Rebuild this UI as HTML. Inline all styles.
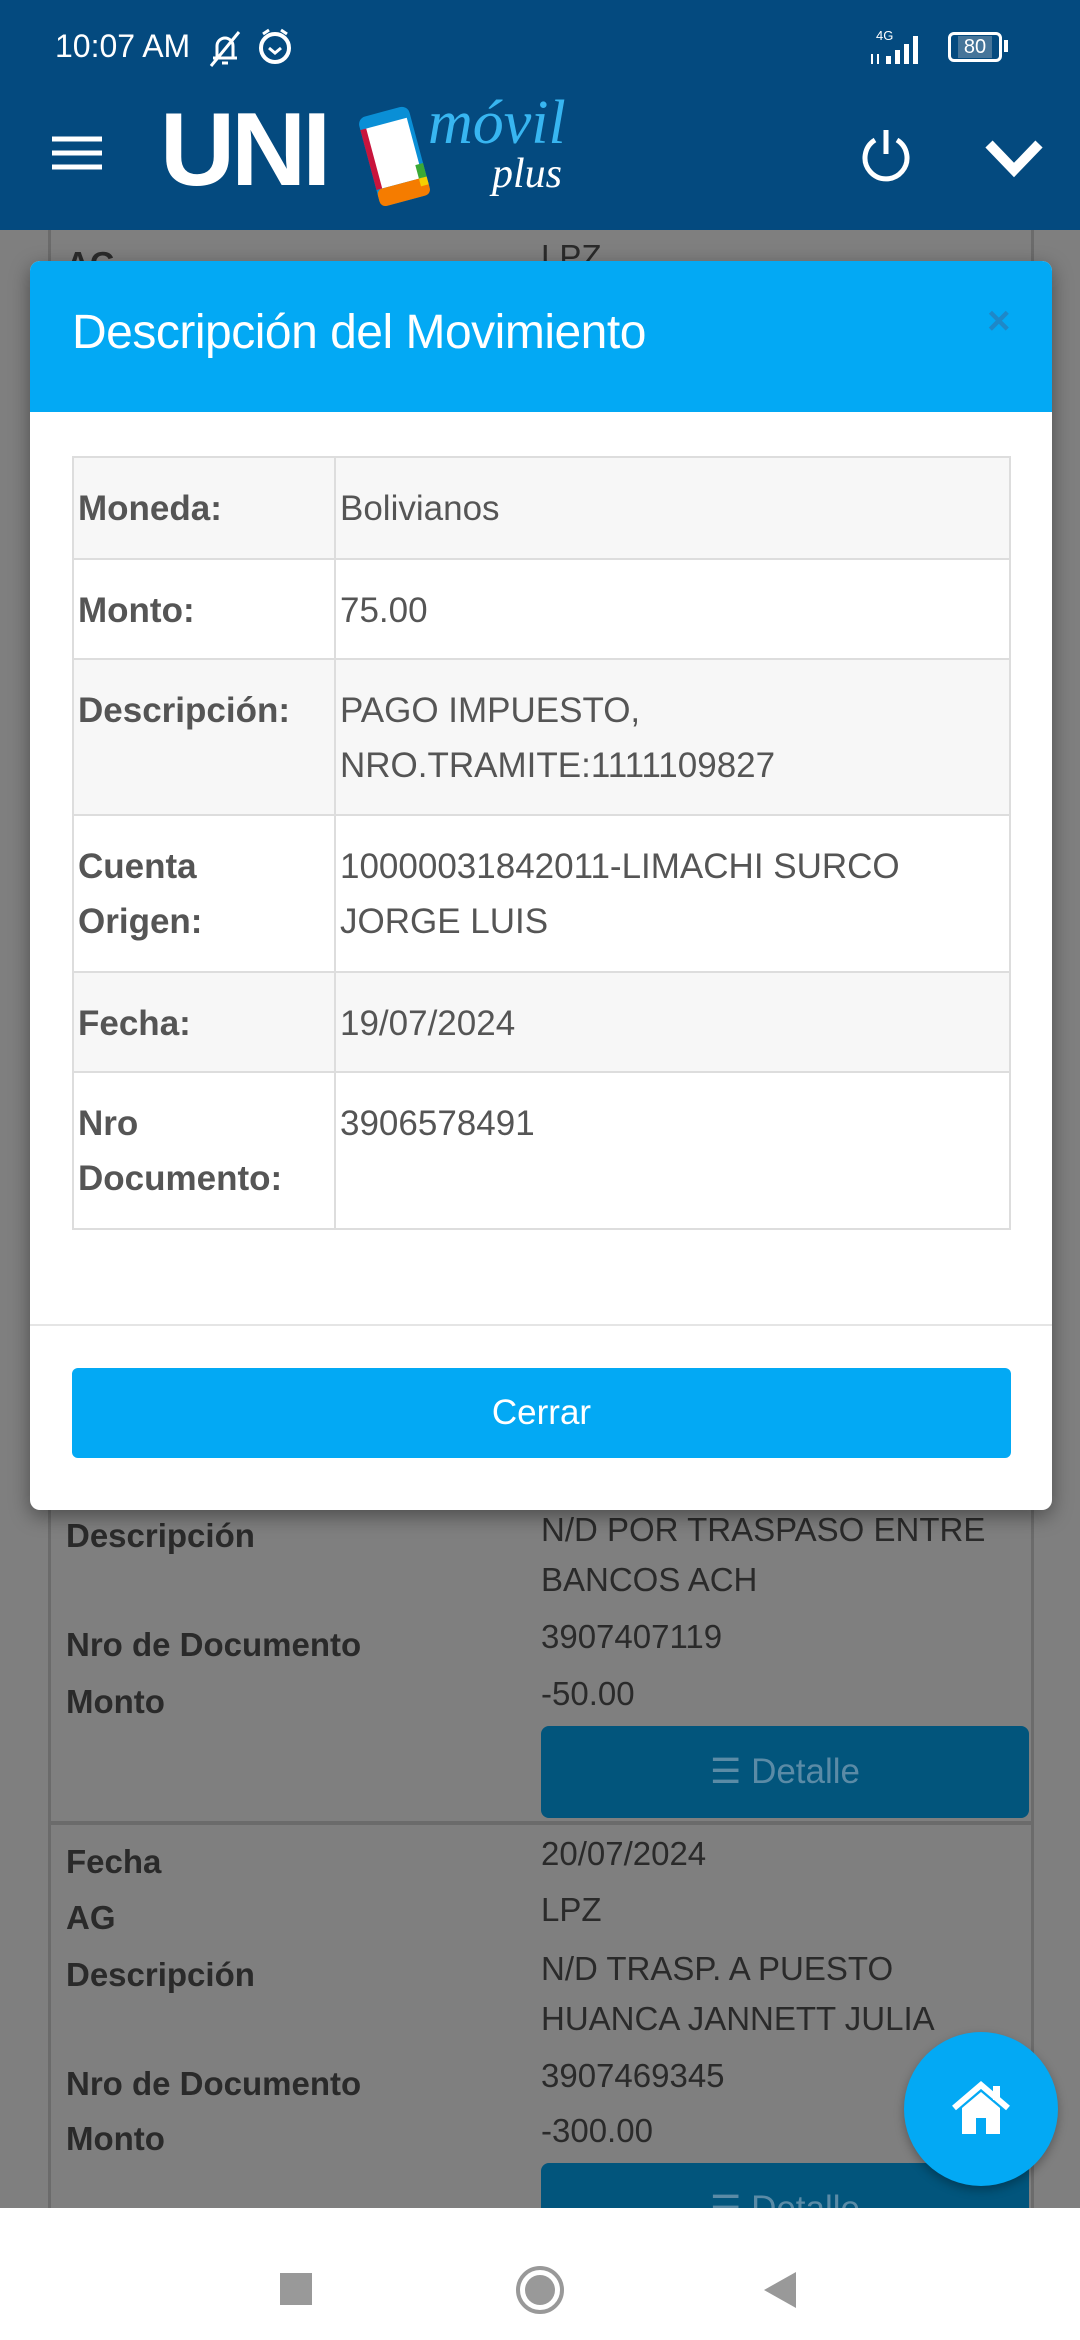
<!DOCTYPE html>
<html><head><meta charset="utf-8"><style>
*{margin:0;padding:0;box-sizing:border-box}
body{width:1080px;height:2340px;position:relative;overflow:hidden;font-family:"Liberation Sans",sans-serif;background:#7f7f7f}
.abs{position:absolute}
.bg{left:0;top:230px;width:1080px;height:1978px;background:#7f7f7f}
.card{left:48px;top:230px;width:986px;height:1990px;border-left:3px solid #6b6b6b;border-right:3px solid #6b6b6b}
.bl{position:absolute;left:66px;font-size:33px;font-weight:bold;color:#2a2a2a}
.bv{position:absolute;left:541px;font-size:33px;color:#2a2a2a;line-height:50px}
.dbtn{position:absolute;left:541px;width:488px;height:92px;background:#02557c;border-radius:8px;color:#5b8ba6;font-size:35px;text-align:center;line-height:92px}
.hdr{left:0;top:0;width:1080px;height:230px;background:#044a7f}
.modal{left:30px;top:261px;width:1022px;height:1249px;background:#fff;border-radius:10px;overflow:hidden;box-shadow:0 6px 20px rgba(0,0,0,.4)}
.mh{height:151px;background:#03a9f4;color:#fff;font-size:48px;padding:44px 0 0 42px;letter-spacing:-0.5px}
table{position:absolute;left:42px;top:195px;width:939px;border-collapse:collapse}
td{border:2px solid #ddd;font-size:35px;color:#555;vertical-align:top;padding:23px 4px 0 4px;line-height:55px}
td.l{font-weight:bold;width:262px}
tr.g td{background:#f7f7f7}
.nav{left:0;top:2208px;width:1080px;height:132px;background:#fff}
</style></head><body>
<div class="abs bg"></div>
<div class="abs card"></div>
<div class="bl" style="top:245px">AG</div><div class="bv" style="top:232px">LPZ</div>
<div class="bl" style="top:1517px">Descripción</div>
<div class="bv" style="top:1505px">N/D POR TRASPASO ENTRE<br>BANCOS ACH</div>
<div class="bl" style="top:1626px">Nro de Documento</div><div class="bv" style="top:1612px">3907407119</div>
<div class="bl" style="top:1683px">Monto</div><div class="bv" style="top:1669px">-50.00</div>
<div class="dbtn" style="top:1726px">☰ Detalle</div>
<div class="abs" style="left:48px;top:1821px;width:986px;height:4px;background:#6b6b6b"></div>
<div class="bl" style="top:1843px">Fecha</div><div class="bv" style="top:1829px">20/07/2024</div>
<div class="bl" style="top:1899px">AG</div><div class="bv" style="top:1885px">LPZ</div>
<div class="bl" style="top:1956px">Descripción</div>
<div class="bv" style="top:1944px">N/D TRASP. A PUESTO<br>HUANCA JANNETT JULIA</div>
<div class="bl" style="top:2065px">Nro de Documento</div><div class="bv" style="top:2051px">3907469345</div>
<div class="bl" style="top:2120px">Monto</div><div class="bv" style="top:2106px">-300.00</div>
<div class="dbtn" style="top:2163px">☰ Detalle</div>

<div class="abs hdr">
 <div class="abs" style="left:55px;top:28px;color:#fff;font-size:32px">10:07 AM</div>
 <svg class="abs" style="left:205px;top:26px" width="90" height="44" viewBox="0 0 90 44"><path d="M8 32h24M12 32V20a8 8 0 0 1 16 0v12M17 37h6M6 40L34 6" stroke="#fff" stroke-width="3" fill="none"/><circle cx="70" cy="22" r="14" stroke="#fff" stroke-width="4" fill="none"/><path d="M64 22l6 5 6-5M58 8l6-4M82 8l-6-4" stroke="#fff" stroke-width="3" fill="none"/></svg>
 <div class="abs" style="left:876px;top:28px;color:#fff;font-size:13px">4G</div>
 <svg class="abs" style="left:868px;top:30px" width="70" height="36"><rect x="18" y="26" width="5" height="8" fill="#fff"/><rect x="27" y="20" width="5" height="14" fill="#fff"/><rect x="36" y="14" width="5" height="20" fill="#fff"/><rect x="45" y="6" width="5" height="28" fill="#fff"/><path d="M4 24v10M10 24v10" stroke="#fff" stroke-width="2"/></svg>
 <div class="abs" style="left:948px;top:32px;width:54px;height:30px;border:3px solid #fff;border-radius:6px;color:#fff;font-size:20px;text-align:center;line-height:24px"><span style="background:#46759a;padding:0 6px">80</span></div>
 <div class="abs" style="left:1004px;top:40px;width:4px;height:12px;background:#fff"></div>
 <svg class="abs" style="left:50px;top:135px" width="54" height="36"><path d="M2 4h50M2 18h50M2 32h50" stroke="#fff" stroke-width="5"/></svg>
 <div class="abs" style="left:160px;top:100px;color:#fff;font-size:104px;font-weight:900;letter-spacing:-4px;line-height:100px">UNI</div>
 <svg class="abs" style="left:350px;top:100px" width="90" height="110" viewBox="0 0 90 110">
  <g transform="rotate(-15 45 55)">
   <rect x="18" y="10" width="52" height="92" rx="8" fill="#0a8fd6"/>
   <rect x="22" y="22" width="44" height="62" fill="#fff"/>
   <rect x="18" y="22" width="6" height="62" fill="#c8143c"/>
   <rect x="18" y="84" width="52" height="18" rx="6" fill="#f57c00"/>
   <rect x="62" y="70" width="8" height="14" fill="#3aa935"/>
   <rect x="62" y="84" width="8" height="8" fill="#f5d000"/>
  </g>
 </svg>
 <div class="abs" style="left:428px;top:88px;color:#38b6f1;font-size:62px;font-style:italic;font-family:'Liberation Serif',serif">móvil</div>
 <div class="abs" style="left:492px;top:150px;color:#fff;font-size:42px;font-style:italic;font-family:'Liberation Serif',serif">plus</div>
 <svg class="abs" style="left:858px;top:128px" width="56" height="56" viewBox="0 0 56 56"><path d="M17 12A21 21 0 1 0 39 12" stroke="#fff" stroke-width="5" fill="none"/><path d="M28 2v24" stroke="#fff" stroke-width="5"/></svg>
 <svg class="abs" style="left:984px;top:138px" width="60" height="40"><path d="M5 6l25 26L55 6" stroke="#fff" stroke-width="10" fill="none"/></svg>
</div>

<div class="abs modal">
 <div class="mh">Descripción del Movimiento<span style="position:absolute;right:42px;top:38px;color:#1e88c8;font-size:40px;font-weight:bold">×</span></div>
 <table>
  <tr class="g" style="height:102px"><td class="l">Moneda:</td><td>Bolivianos</td></tr>
  <tr style="height:100px"><td class="l">Monto:</td><td>75.00</td></tr>
  <tr class="g" style="height:156px"><td class="l">Descripción:</td><td>PAGO IMPUESTO,<br>NRO.TRAMITE:1111109827</td></tr>
  <tr style="height:157px"><td class="l">Cuenta<br>Origen:</td><td>10000031842011-LIMACHI SURCO<br>JORGE LUIS</td></tr>
  <tr class="g" style="height:100px"><td class="l">Fecha:</td><td>19/07/2024</td></tr>
  <tr style="height:157px"><td class="l">Nro<br>Documento:</td><td>3906578491</td></tr>
 </table>
 <div class="abs" style="left:0;top:1063px;width:1022px;height:2px;background:#e5e5e5"></div>
 <div class="abs" style="left:42px;top:1107px;width:939px;height:90px;background:#03a9f4;border-radius:6px;color:#fff;font-size:35px;text-align:center;line-height:90px">Cerrar</div>
</div>

<div class="abs" style="left:904px;top:2032px;width:154px;height:154px;border-radius:50%;background:#03a9f4;box-shadow:0 4px 10px rgba(0,0,0,.3)"></div>
<svg class="abs" style="left:951px;top:2080px" width="60" height="56" viewBox="0 0 60 56"><path d="M3 28L30 5l27 23" stroke="#fff" stroke-width="6" fill="none"/><path d="M11 28v26h14V38h10v16h14V28L30 12z" fill="#fff"/><rect x="42" y="6" width="7" height="14" fill="#fff"/></svg>

<div class="abs nav">
 <div class="abs" style="left:280px;top:65px;width:32px;height:32px;background:#999"></div>
 <div class="abs" style="left:516px;top:58px;width:48px;height:48px;border-radius:50%;border:4px solid #999;background:#fff"><div style="margin:5px;width:30px;height:30px;border-radius:50%;background:#999"></div></div>
 <svg class="abs" style="left:762px;top:62px" width="36" height="40"><path d="M34 2v36L2 20z" fill="#999"/></svg>
</div>
</body></html>
